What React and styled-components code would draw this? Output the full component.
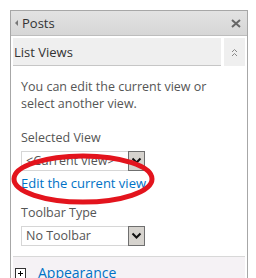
import React from "react"
import styled, { createGlobalStyle } from "styled-components"

const Global = createGlobalStyle`
  html, body {
    margin: 0;
    padding: 0;
    background: #fff;
    overflow: hidden;
  }
  body {
    font-family: "Open Sans", "Noto Sans", sans-serif;
  }
`

const Page = styled.div`
  position: relative;
  width: 256px;
  height: 278px;
  padding: 10px 0 0 10px;
  box-sizing: border-box;
  overflow: hidden;
`

const Panel = styled.div`
  width: 238px;
  height: 290px;
  border: 1px solid #a7a7a7;
  box-sizing: border-box;
  background: #fff;
`

const Header = styled.div`
  height: 24px;
  display: flex;
  align-items: center;
  padding: 0 6px 0 4px;
  background: linear-gradient(#e2e2e2, #d6d6d6);
  border-bottom: 1px solid #bdbdbd;
  color: #333;
  font-size: 13px;
`

const Arrow = styled.span`
  width: 0;
  height: 0;
  border-top: 3px solid transparent;
  border-bottom: 3px solid transparent;
  border-right: 3px solid #777;
  margin-right: 4px;
`

const Title = styled.span`
  flex: 1;
`

const Body = styled.div`
  padding: 2px 2px 0 2px;
`

const SectionHead = styled.div`
  display: flex;
  gap: 3px;
  height: 28px;
`

const SectionTitle = styled.div`
  flex: 1;
  display: flex;
  align-items: center;
  padding-left: 1px;
  background: #efefef;
  border-bottom: 1px solid #c6c6c6;
  color: #333;
  font-size: 13px;
`

const CollapseBtn = styled.div`
  width: 21px;
  background: #efefef;
  display: flex;
  align-items: center;
  justify-content: center;
`

const Content = styled.div`
  padding: 12px 0 0 8px;
  color: #555;
  font-size: 12.5px;
`

const Intro = styled.p`
  margin: 0 0 17px;
  line-height: 17px;
`

const Label = styled.div`
  line-height: 17px;
  margin-bottom: 5px;
`

const Select = styled.div`
  width: 124px;
  height: 20px;
  display: flex;
  border: 1px solid #d6d6d6;
  box-sizing: border-box;
  color: #555;
`

const SelectText = styled.div`
  flex: 1;
  padding-left: 4px;
  line-height: 18px;
  white-space: nowrap;
  overflow: hidden;
`

const DropBtn = styled.div`
  width: 17px;
  background: #d6d3ce;
  border: 1px solid #6f6f6f;
  box-sizing: border-box;
  margin: -1px -1px -1px 0;
  display: flex;
  align-items: center;
  justify-content: center;
`

const EditLink = styled.a`
  display: block;
  color: #0072c6;
  text-decoration: none;
  line-height: 17px;
  margin: 4px 0 12px;
  font-size: 13px;
`

const Footer = styled.div`
  margin-top: 10px;
  border-top: 1px solid #d8d8d8;
  background: #f5f2f5;
  height: 40px;
  display: flex;
  align-items: flex-start;
  padding: 9px 0 0 2px;
  box-sizing: border-box;
`

const PlusBox = styled.div`
  width: 9px;
  height: 9px;
  border: 1px solid #333;
  background: #fff;
  position: relative;
  margin-top: 2px;
  margin-right: 12px;
  &::before {
    content: "";
    position: absolute;
    left: 2px;
    top: 4px;
    width: 5px;
    height: 1px;
    background: #000;
  }
  &::after {
    content: "";
    position: absolute;
    left: 4px;
    top: 2px;
    width: 1px;
    height: 5px;
    background: #000;
  }
`

const FooterLink = styled.span`
  color: #0072c6;
  font-size: 14px;
  line-height: 14px;
`

const Circle = styled.svg`
  position: absolute;
  left: 0;
  top: 0;
  pointer-events: none;
`

const Chevron = () => (
  <svg width="11" height="8" viewBox="0 0 11 8">
    <path d="M1.5 1.5 L5.5 5.5 L9.5 1.5" fill="none" stroke="#111" strokeWidth="2" />
  </svg>
)

export default function App() {
  return (
    <Page>
      <Global />
      <Panel>
        <Header>
          <Arrow />
          <Title>Posts</Title>
          <svg width="10" height="9" viewBox="0 0 10 9">
            <path d="M1 1 L9 8 M9 1 L1 8" stroke="#666" strokeWidth="2" />
          </svg>
        </Header>
        <Body>
          <SectionHead>
            <SectionTitle>List Views</SectionTitle>
            <CollapseBtn>
              <svg width="7" height="9" viewBox="0 0 7 9">
                <path d="M1 4 L3.5 1.5 L6 4 M1 8 L3.5 5.5 L6 8" fill="none" stroke="#888" strokeWidth="1" />
              </svg>
            </CollapseBtn>
          </SectionHead>
          <Content>
            <Intro>
              You can edit the current view or
              <br />
              select another view.
            </Intro>
            <Label>Selected View</Label>
            <Select>
              <SelectText>&lt;Current view&gt;</SelectText>
              <DropBtn><Chevron /></DropBtn>
            </Select>
            <EditLink href="#">Edit the current view</EditLink>
            <Label>Toolbar Type</Label>
            <Select>
              <SelectText>No Toolbar</SelectText>
              <DropBtn><Chevron /></DropBtn>
            </Select>
          </Content>
          <Footer>
            <PlusBox />
            <FooterLink>Appearance</FooterLink>
          </Footer>
        </Body>
      </Panel>
      <Circle width="256" height="278" viewBox="0 0 256 278">
        <ellipse cx="83" cy="179" rx="69" ry="23" fill="none" stroke="#e3141d" strokeWidth="5" />
      </Circle>
    </Page>
  )
}
